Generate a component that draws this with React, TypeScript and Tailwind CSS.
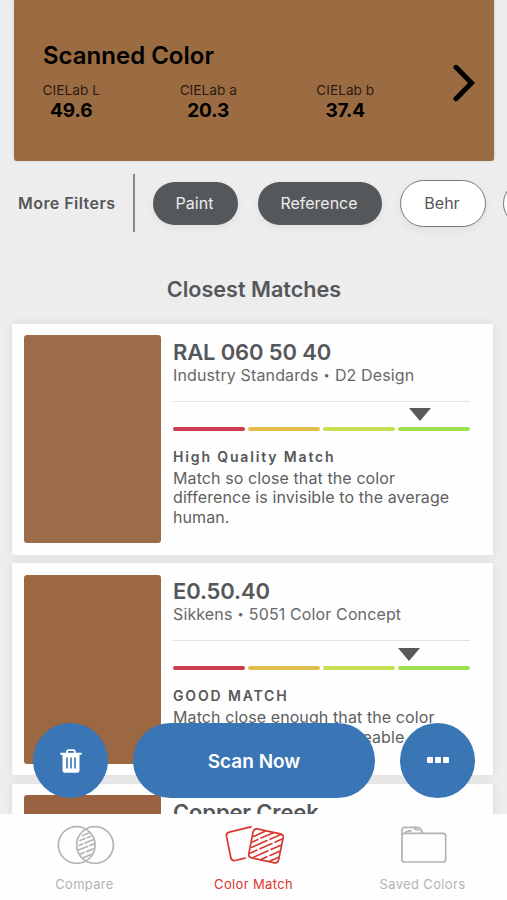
import React from "react";

type Match = {
  name: string;
  source: [string, string];
  swatch: string;
  swatchHeight: string;
  marker: string;
  quality: string;
  description: string[];
};

const matches: Match[] = [
  {
    name: "RAL 060 50 40",
    source: ["Industry Standards", "D2 Design"],
    swatch: "bg-[#9c6c4a]",
    swatchHeight: "h-[208px]",
    marker: "ml-[236px]",
    quality: "High Quality Match",
    description: ["Match so close that the color", "difference is invisible to the average", "human."],
  },
  {
    name: "E0.50.40",
    source: ["Sikkens", "5051 Color Concept"],
    swatch: "bg-[#9b6841]",
    swatchHeight: "h-[189px]",
    marker: "ml-[224.5px]",
    quality: "GOOD MATCH",
    description: ["Match close enough that the color", "difference is barely noticeable"],
  },
  {
    name: "Copper Creek",
    source: ["Behr", "Paint"],
    swatch: "bg-[#9b6241]",
    swatchHeight: "h-[189px]",
    marker: "ml-[224.5px]",
    quality: "GOOD MATCH",
    description: ["Match close enough that the color"],
  },
];

const readings = [
  { label: "CIELab L", value: "49.6" },
  { label: "CIELab a", value: "20.3" },
  { label: "CIELab b", value: "37.4" },
];

function ScannedColor() {
  return (
    <section className="ml-3.5 flex h-[161px] w-[480px] shrink-0 items-start justify-between rounded-b-[3px] bg-[#9b6b42] text-black shadow-[0_0_3px_rgba(0,0,0,0.15)]">
      <div className="pt-[41px] pl-[3px]">
        <h1 className="pl-[26px] text-[24px] leading-[30px] font-semibold">Scanned Color</h1>
        <div className="mt-3 flex">
          {readings.map((r) => (
            <div key={r.label} className="w-[137px] pr-[28.5px] text-center whitespace-nowrap">
              <div className="text-[13.7px] leading-[15px] text-black/75">{r.label}</div>
              <div className="text-[19px] leading-[25px] font-bold tracking-[-0.1px]">{r.value}</div>
            </div>
          ))}
        </div>
      </div>
      <svg className="mt-[63px] mr-[15px]" width="26" height="40" viewBox="0 0 26 40" fill="none" stroke="black" strokeWidth="5">
        <path d="M3 4.3 18.5 20 3 35.7" strokeLinecap="round" />
      </svg>
    </section>
  );
}

function Filters() {
  return (
    <div className="flex h-[84px] shrink-0 items-center overflow-hidden text-[16px] whitespace-nowrap">
      <span className="ml-[18px] w-[115px] shrink-0 font-semibold tracking-[0.45px]">More Filters</span>
      <span className="h-[58px] w-0.5 shrink-0 bg-[#85878a]" />
      <span className="ml-[18px] flex h-[43px] w-[85px] shrink-0 items-center justify-center rounded-full bg-[#55585a] pr-[2px] text-[#ededed] shadow-[0_3px_8px_rgba(0,0,0,0.06)]">Paint</span>
      <span className="ml-5 flex h-[43px] w-[124px] shrink-0 items-center justify-center rounded-full bg-[#55585a] pr-[2px] text-[#ededed] shadow-[0_3px_8px_rgba(0,0,0,0.06)]">Reference</span>
      <span className="ml-[18px] flex h-[47px] w-[86px] shrink-0 items-center justify-center rounded-full border-[1.5px] border-[#77797b] bg-white pr-[2px] shadow-[0_3px_8px_rgba(0,0,0,0.06)]">Behr</span>
      <span className="ml-[17px] h-[47px] w-[86px] shrink-0 rounded-full border-[1.5px] border-[#77797b] bg-white" />
    </div>
  );
}

function MatchCard({ match }: { match: Match }) {
  return (
    <article className="flex w-[481px] shrink-0 gap-3 rounded-[2px] bg-[#fefefe] p-3 pt-[11.5px] pb-[11.5px] shadow-[0_0_10px_rgba(0,0,0,0.08)]">
      <div className={`w-[137px] shrink-0 rounded-[3px] ${match.swatchHeight} ${match.swatch}`} />
      <div className="h-[180px] w-[297px] pt-[3.8px] whitespace-nowrap">
        <h3 className="text-[22px] leading-[26px] font-semibold tracking-[-0.15px]">{match.name}</h3>
        <p className="flex items-center text-[16px] leading-5 tracking-[0.13px] text-[#66686a]">
          {match.source[0]}
          <span className="mx-[5px] text-[11px]">•</span>
          {match.source[1]}
        </p>
        <div className="mt-[16px] h-px bg-[#e2e2e2]" />
        <svg className={`mt-[6.5px] ${match.marker}`} width="22" height="13" viewBox="0 0 22 13">
          <path d="M0 0h22L11 13z" fill="#58595b" />
        </svg>
        <div className="mt-[5.5px] grid h-[4px] grid-cols-4 gap-[3px]">
          <span className="rounded-full bg-[#ce3b4e]" />
          <span className="rounded-full bg-[#e2bf4c]" />
          <span className="rounded-full bg-[#c6df52]" />
          <span className="rounded-full bg-[#9fe24f]" />
        </div>
        <h4 className="mt-[15.6px] text-[14px] leading-5 font-semibold tracking-[1.85px]">{match.quality}</h4>
        <div className="mt-[2.4px] text-[16px] leading-[19.5px] tracking-[0.1px] text-[#5d5f61]">
          {match.description.map((line) => (
            <p key={line}>{line}</p>
          ))}
        </div>
      </div>
    </article>
  );
}

function ActionBar() {
  return (
    <div className="absolute top-[723.4px] left-[33px] flex h-[74.5px] w-[442px] justify-between text-white">
      <button className="flex w-[75px] items-center justify-center rounded-full bg-[#3a75b6]">
        <svg width="22" height="24" viewBox="0 0 22 24" fill="none">
          <path d="M7 4V2.8Q7 1.2 8.5 1.2h5Q15 1.2 15 2.8V4" stroke="white" strokeWidth="1.8" />
          <path d="M1 4.7h20" stroke="white" strokeWidth="1.9" strokeLinecap="round" />
          <path d="M2.5 5h17v16.5a2.3 2.3 0 0 1-2.3 2.3H4.8a2.3 2.3 0 0 1-2.3-2.3z" fill="white" />
          <path d="M7 8.5v11M11 8.5v11M15 8.5v11" stroke="#3a75b6" strokeWidth="1.6" />
        </svg>
      </button>
      <button className="w-[242px] rounded-full bg-[#3a75b6] pt-[2.5px] text-[19px] font-semibold">Scan Now</button>
      <button className="flex w-[75px] items-center justify-center gap-[2px] rounded-full bg-[#3a75b6] pb-[2px]">
        <span className="h-[6px] w-[6px] rounded-[1px] bg-white" />
        <span className="h-[6px] w-[6px] rounded-[1px] bg-white" />
        <span className="h-[6px] w-[6px] rounded-[1px] bg-white" />
      </button>
    </div>
  );
}

function CompareIcon() {
  return (
    <svg width="60" height="42" viewBox="0 0 60 42" fill="none" stroke="currentColor" strokeWidth="1.7" strokeLinecap="round">
      <circle cx="21.7" cy="21" r="18.4" />
      <circle cx="40" cy="21" r="18.4" />
      <path strokeWidth="1.7" d="M27.5 11.5 34 9M25 16.5 30 14.5M32.5 13.5 35.5 12.3M24 21.5 27.5 20M30 19 38 15.8M23.5 26 32.5 22.5M35 21.5 38.5 20.1M25.5 30 29 28.6M31.5 27.6 38 25M28 33.8 36 30.6" />
    </svg>
  );
}

function MatchIcon() {
  return (
    <svg width="60" height="42" viewBox="0 0 60 42" fill="none" stroke="currentColor" strokeWidth="1.7" strokeLinecap="round" strokeLinejoin="round">
      <path d="M27 2.8 5.3 8.1Q2 9 2.5 12.2L6.8 33.5Q7.6 37.2 11 36.5L21 34.2" />
      <path d="M33.2 4.9 56.2 9.8Q60 10.7 59.1 14L54.6 35.8Q53.8 39.5 50.5 38.8L27.5 33.8Q24.1 33 24.8 29.6L29.1 8Q30 4.3 33.2 4.9Z" />
      <path strokeWidth="1.6" d="M29.5 12.5 41 7.3M28.5 18 34 15.5M37 14.1 49.5 8.7M27.5 23.5 43 16.6M46 15.3 57.5 10.3M26 29.2 33 26.1M36 24.8 48 19.5M51 18.2 58 15.1M30 33 44 26.8M47 25.5 56.8 21.2M37.5 35.2 43 32.8M46 31.5 55.5 27.3M45.5 37.2 54.5 33.2" />
    </svg>
  );
}

function FolderIcon() {
  return (
    <svg width="60" height="42" viewBox="0 0 60 42" fill="none" stroke="currentColor" strokeWidth="1.7" strokeLinecap="round" strokeLinejoin="round">
      <path d="M9 11V6Q9 3.3 11.5 3.3H24.5Q26.5 3.3 27.5 5L30 9.3H50.2Q52.7 9.3 52.7 11.8V35.5Q52.7 38 50.2 38H11.5Q9 38 9 35.5V11.8Q9 9.3 11.5 9.3H30" />
      <path d="M12.5 8 18 6.6M21.5 4.8 25.5 6" strokeWidth="1.8" />
    </svg>
  );
}

function BottomNav() {
  return (
    <nav className="grid h-[86px] shrink-0 grid-cols-3 bg-[#fefefe] text-[13px] leading-4 text-[#b4b4b4]">
      <div className="flex flex-col items-center pt-[10px]">
        <CompareIcon />
        <span className="mt-[10px] tracking-[0.3px]">Compare</span>
      </div>
      <div className="flex flex-col items-center pt-[10px] text-[#d9362f]">
        <MatchIcon />
        <span className="mt-[10px] tracking-[0.35px]">Color Match</span>
      </div>
      <div className="flex flex-col items-center pt-[10px]">
        <FolderIcon />
        <span className="mt-[10px] tracking-[0.35px]">Saved Colors</span>
      </div>
    </nav>
  );
}

export default function App() {
  return (
    <div className="relative flex h-[900px] w-[507px] flex-col overflow-hidden bg-[#ededed] font-['Inter',sans-serif] text-[#55575a]">
      <main className="flex min-h-0 flex-1 flex-col overflow-hidden">
        <ScannedColor />
        <Filters />
        <h2 className="mt-[29px] h-[49.7px] shrink-0 pt-[1px] pl-px text-center text-[21.6px] leading-[28px] font-semibold">Closest Matches</h2>
        <div className="ml-3 flex flex-col gap-[8.5px]">
          {matches.map((m) => (
            <MatchCard key={m.name} match={m} />
          ))}
        </div>
      </main>
      <ActionBar />
      <BottomNav />
    </div>
  );
}
